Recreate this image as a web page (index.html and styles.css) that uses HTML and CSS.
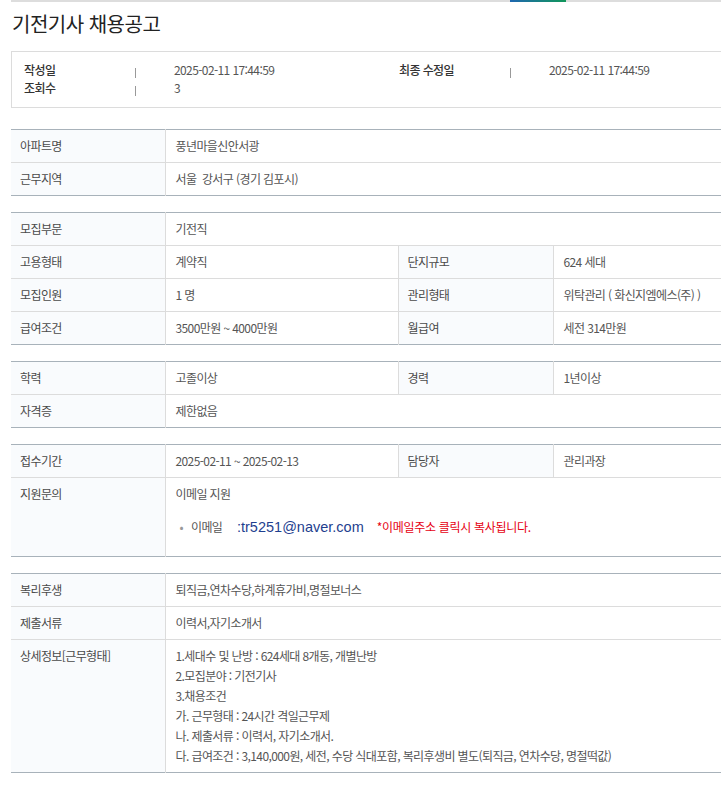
FILE: index.html
```html
<!DOCTYPE html>
<html lang="ko">
<head>
<meta charset="utf-8">
<title>기전기사 채용공고</title>
<link rel="stylesheet" href="styles.css">
</head>
<body>
<div class="page">
  <div class="topbar"><span class="accent"></span></div>
  <h1 class="title">기전기사 채용공고</h1>

  <div class="meta">
    <div class="meta-row">
      <span class="mlabel">작성일</span><span class="sep"></span><span class="mval">2025-02-11 17:44:59</span>
      <span class="mlabel">최종 수정일</span><span class="sep"></span><span class="mval">2025-02-11 17:44:59</span>
    </div>
    <div class="meta-row">
      <span class="mlabel">조회수</span><span class="sep"></span><span class="mval">3</span>
    </div>
  </div>

  <table class="info">
    <colgroup><col class="c1"><col class="c2"><col class="c3"><col class="c4"></colgroup>
    <tr><th>아파트명</th><td colspan="3">풍년마을신안서광</td></tr>
    <tr><th>근무지역</th><td colspan="3">서울&nbsp; 강서구 (경기 김포시)</td></tr>
  </table>

  <table class="info">
    <colgroup><col class="c1"><col class="c2"><col class="c3"><col class="c4"></colgroup>
    <tr><th>모집부문</th><td colspan="3">기전직</td></tr>
    <tr><th>고용형태</th><td>계약직</td><th>단지규모</th><td>624 세대</td></tr>
    <tr><th>모집인원</th><td>1 명</td><th>관리형태</th><td>위탁관리 ( 화신지엠에스(주) )</td></tr>
    <tr><th>급여조건</th><td>3500만원 ~ 4000만원</td><th>월급여</th><td>세전 314만원</td></tr>
  </table>

  <table class="info">
    <colgroup><col class="c1"><col class="c2"><col class="c3"><col class="c4"></colgroup>
    <tr><th>학력</th><td>고졸이상</td><th>경력</th><td>1년이상</td></tr>
    <tr><th>자격증</th><td colspan="3">제한없음</td></tr>
  </table>

  <table class="info">
    <colgroup><col class="c1"><col class="c2"><col class="c3"><col class="c4"></colgroup>
    <tr><th>접수기간</th><td>2025-02-11 ~ 2025-02-13</td><th>담당자</th><td>관리과장</td></tr>
    <tr>
      <th>지원문의</th>
      <td colspan="3">
        <div>이메일 지원</div>
        <div class="contact">
          <span class="dot">•</span><span class="clabel">이메일</span><span class="email">:tr5251@naver.com</span><span class="note">*이메일주소 클릭시 복사됩니다.</span>
        </div>
      </td>
    </tr>
  </table>

  <table class="info">
    <colgroup><col class="c1"><col class="c2"><col class="c3"><col class="c4"></colgroup>
    <tr><th>복리후생</th><td colspan="3">퇴직금,연차수당,하계휴가비,명절보너스</td></tr>
    <tr><th>제출서류</th><td colspan="3">이력서,자기소개서</td></tr>
    <tr>
      <th>상세정보[근무형태]</th>
      <td colspan="3">
        <div>1.세대수 및 난방 : 624세대 8개동, 개별난방</div>
        <div>2.모집분야 : 기전기사</div>
        <div>3.채용조건</div>
        <div>가. 근무형태 : 24시간 격일근무제</div>
        <div>나. 제출서류 : 이력서, 자기소개서.</div>
        <div>다. 급여조건 : 3,140,000원, 세전, 수당 식대포함, 복리후생비 별도(퇴직금, 연차수당, 명절떡값)</div>
      </td>
    </tr>
  </table>
</div>
</body>
</html>
```

FILE: styles.css
```css
html, body {
  margin: 0;
  padding: 0;
  background: #fff;
  overflow: hidden;
}

body {
  font-family: "Noto Sans CJK KR", "Noto Sans", sans-serif;
  font-size: 12px;
  color: #555;
}

.page {
  margin-left: 11px;
  width: 775px;
}

.topbar {
  height: 2px;
  background: #dddddd;
  position: relative;
}

.accent {
  position: absolute;
  left: 499px;
  top: 0;
  width: 56px;
  height: 2px;
  background: linear-gradient(90deg, #1f67b0, #11975a);
}

.title {
  margin: 8px 0 13px 1px;
  font-size: 20px;
  line-height: 28px;
  font-weight: 400;
  color: #222;
  letter-spacing: -0.5px;
}

.meta {
  border: 1px solid #dcdcdc;
  padding: 9px 0 10px 12px;
}

.meta-row {
  display: grid;
  grid-template-columns: 111px 39px 225px 111px 39px 1fr;
  line-height: 18px;
  height: 18px;
  align-items: center;
}

.mlabel {
  color: #333;
  font-weight: 500;
  letter-spacing: -0.6px;
}

.mval {
  color: #555;
  letter-spacing: -0.6px;
}

.sep {
  display: block;
  width: 1px;
  height: 10px;
  background: #999;
  margin-top: 5px;
}

.info {
  width: 775px;
  border-collapse: collapse;
  table-layout: fixed;
  margin-top: 16px;
  border-top: 1px solid #a8b2ba;
  border-bottom: 1px solid #a8b2ba;
}

.meta + .info {
  margin-top: 21px;
}

.c1 { width: 154px; }
.c2 { width: 233px; }
.c3 { width: 155px; }
.c4 { width: 233px; }

.info th,
.info td {
  padding: 6px 9px 6px 10px;
  line-height: 20px;
  text-align: left;
  vertical-align: top;
  font-weight: 400;
  letter-spacing: -0.6px;
  border-top: 1px solid #dcdcdc;
  border-left: 1px solid #dcdcdc;
  white-space: nowrap;
}

.info th {
  background: #f9fbfd;
  color: #4a4a4a;
  padding-left: 9px;
}

.info td {
  color: #555;
}

.info tr:first-child th,
.info tr:first-child td {
  border-top: none;
}

.info th:first-child {
  border-left: none;
}

.contact {
  margin: 13px 0 13px 4px;
  display: flex;
  align-items: baseline;
}

.dot {
  color: #999;
  margin-right: 8px;
  font-size: 12px;
}

.clabel {
  width: 46px;
}

.email {
  font-family: "Liberation Sans", Arial, sans-serif;
  font-size: 14.5px;
  color: #1f3f8f;
  letter-spacing: 0;
  margin-right: 13px;
}

.note {
  color: #e60012;
  letter-spacing: -0.3px;
}
```
